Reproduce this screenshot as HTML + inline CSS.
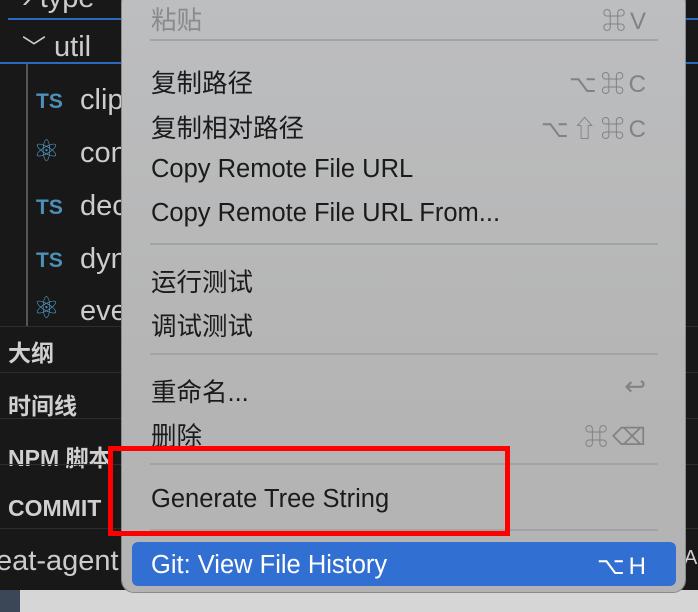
<!DOCTYPE html><html><head><meta charset="utf-8"><style>
body{margin:0;width:698px;height:612px;overflow:hidden;background:#181818;position:relative;font-family:"Liberation Sans","Noto Sans CJK SC",sans-serif}
.a{position:absolute}
.t{color:#cccccc;font-size:29px;white-space:nowrap}
.hd{color:#d0d0d0;font-size:23px;font-weight:bold;white-space:nowrap}
.hl{height:1px;background:#2e2e2e;left:0;width:130px}
.ts{color:#4d8fb8;font-weight:bold;font-size:21px}
.at{color:#4d8fb8;font-size:30px;line-height:30px}
.menu{left:122px;top:-10px;width:563px;height:602px;background:linear-gradient(#bdbec0,#b5b5b5 60%,#b3b3b3);border-radius:12px;box-shadow:0 0 0 1px #8a8a8a}
.mi{left:151px;font-size:25.5px;color:#1b1b1b;white-space:nowrap}
.sc{right:48px;font-size:24px;color:#828282;white-space:nowrap;letter-spacing:4px}
.sep{left:150px;width:508px;height:2px;background:#a3a3a3}
</style></head><body>
<div class="a" style="left:0;top:590px;width:698px;height:22px;background:#d6d6d6"></div>
<div class="a" style="left:0;top:590px;width:20px;height:22px;background:#3b4656"></div>
<div class="a" style="left:8px;top:18px;width:690px;height:2px;background:#2a6ac0"></div>
<div class="a" style="left:0;top:62px;width:698px;height:2px;background:#2a6ac0"></div>
<div class="a" style="left:26px;top:64px;width:2px;height:262px;background:#555"></div>
<div class="a t" style="left:22px;top:28px"><span style="font-size:24px">﹀</span> util</div>
<div class="a t" style="left:22px;top:-18px">› type</div>
<div class="a ts" style="left:36px;top:90px">TS</div><div class="a t" style="left:80px;top:84px">clip</div>
<div class="a at" style="left:33px;top:137px">⚛</div><div class="a t" style="left:80px;top:137px">con</div>
<div class="a ts" style="left:36px;top:196px">TS</div><div class="a t" style="left:80px;top:190px">dec</div>
<div class="a ts" style="left:36px;top:249px">TS</div><div class="a t" style="left:80px;top:243px">dyn</div>
<div class="a at" style="left:33px;top:294px">⚛</div><div class="a t" style="left:80px;top:295px">eve</div>
<div class="a hl" style="top:326px;width:698px"></div>
<div class="a hd" style="left:8px;top:334px">大纲</div>
<div class="a hl" style="top:372px;width:698px"></div>
<div class="a hd" style="left:8px;top:387px">时间线</div>
<div class="a hl" style="top:418px;width:698px"></div>
<div class="a hd" style="left:8px;top:439px">NPM 脚本</div>
<div class="a hl" style="top:464px;width:698px"></div>
<div class="a hd" style="left:8px;top:495px">COMMIT</div>
<div class="a hl" style="top:528px;width:698px"></div>
<div class="a t" style="left:-4px;top:545px">eat-agent</div>
<div class="a t" style="left:684px;top:547px;font-size:20px">A</div>
<div class="a menu"></div>
<div class="a mi" style="top:0px;color:#8a8a8a">粘贴</div><div class="a sc" style="top:1px">⌘V</div>
<div class="a sep" style="top:39px"></div>
<div class="a mi" style="top:63px">复制路径</div><div class="a sc" style="top:64px">⌥⌘C</div>
<div class="a mi" style="top:108px">复制相对路径</div><div class="a sc" style="top:109px">⌥⇧⌘C</div>
<div class="a mi" style="top:155px">Copy Remote File URL</div>
<div class="a mi" style="top:199px">Copy Remote File URL From...</div>
<div class="a sep" style="top:243px"></div>
<div class="a mi" style="top:262px">运行测试</div>
<div class="a mi" style="top:306px">调试测试</div>
<div class="a sep" style="top:353px"></div>
<div class="a mi" style="top:372px">重命名...</div><div class="a sc" style="top:371px;font-size:26px">↩</div>
<div class="a mi" style="top:416px">删除</div><div class="a sc" style="top:417px">⌘⌫</div>
<div class="a sep" style="top:463px"></div>
<div class="a mi" style="top:485px">Generate Tree String</div>
<div class="a sep" style="top:529px"></div>
<div class="a" style="left:132px;top:542px;width:544px;height:44px;background:#3170d2;border-radius:6px"></div>
<div class="a mi" style="top:551px;color:#fff">Git: View File History</div><div class="a sc" style="top:552px;color:#fff">⌥H</div>
<div class="a" style="left:108px;top:446px;width:392px;height:80px;border:5px solid #f00"></div>
</body></html>
